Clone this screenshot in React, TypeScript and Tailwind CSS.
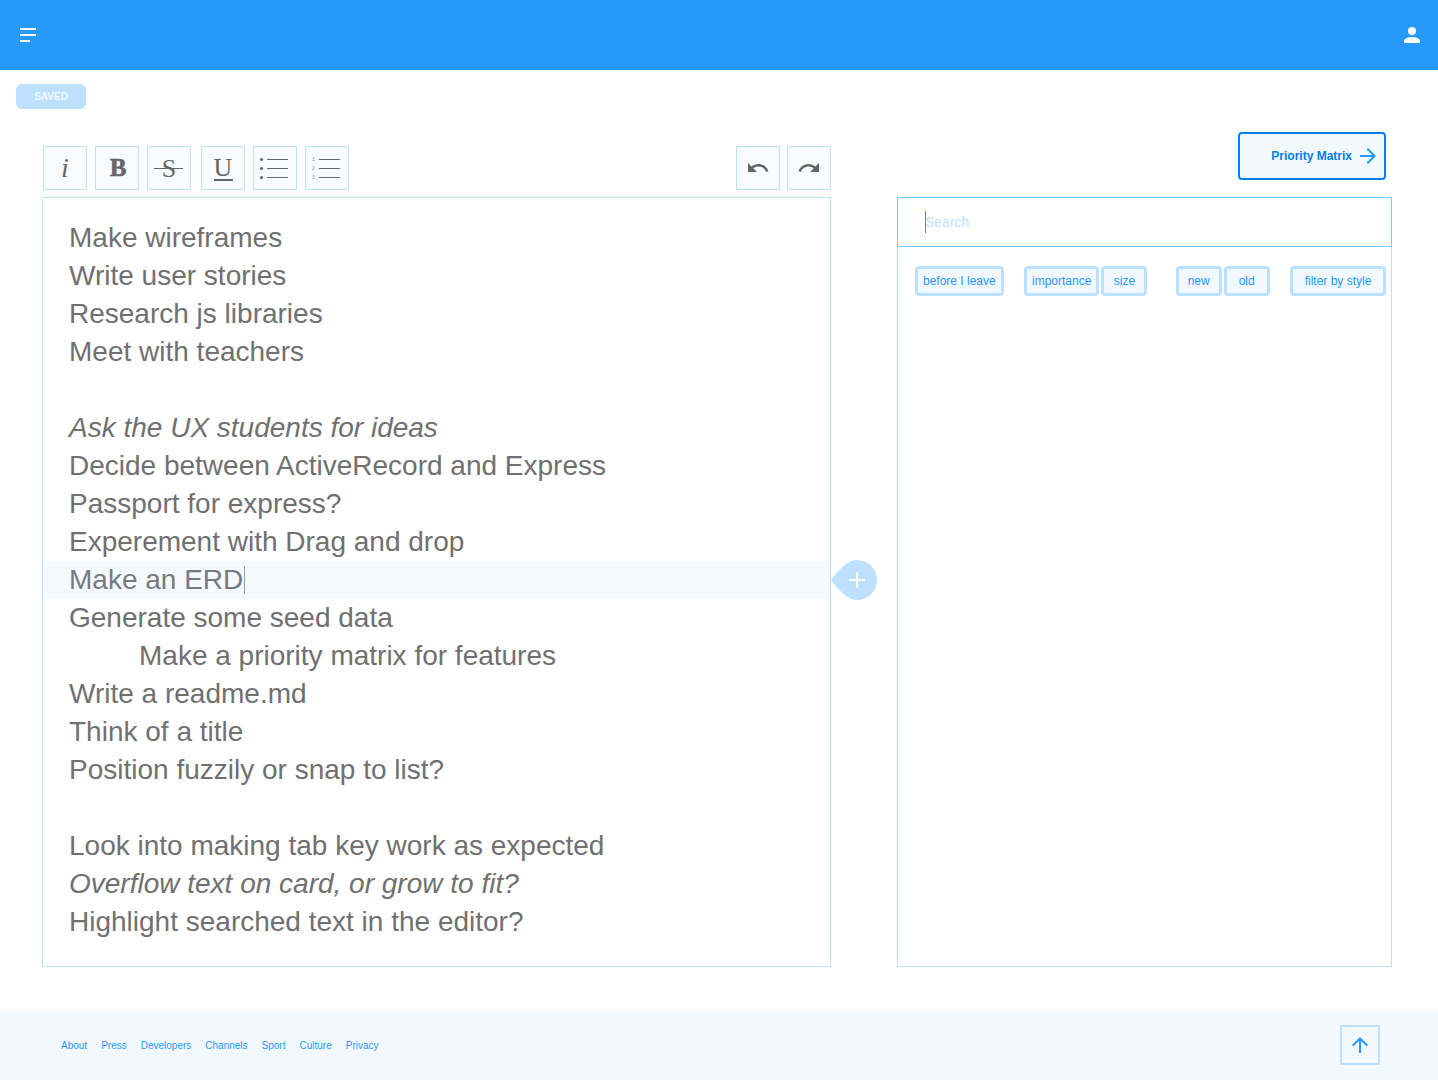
import type { ReactNode } from 'react';

type Line = { text: string; italic?: boolean; indent?: boolean; active?: boolean };

const lines: Line[] = [
  { text: 'Make wireframes' },
  { text: 'Write user stories' },
  { text: 'Research js libraries' },
  { text: 'Meet with teachers' },
  { text: '' },
  { text: 'Ask the UX students for ideas', italic: true },
  { text: 'Decide between ActiveRecord and Express' },
  { text: 'Passport for express?' },
  { text: 'Experement with Drag and drop' },
  { text: 'Make an ERD', active: true },
  { text: 'Generate some seed data' },
  { text: 'Make a priority matrix for features', indent: true },
  { text: 'Write a readme.md' },
  { text: 'Think of a title' },
  { text: 'Position fuzzily or snap to list?' },
  { text: '' },
  { text: 'Look into making tab key work as expected' },
  { text: 'Overflow text on card, or grow to fit?', italic: true },
  { text: 'Highlight searched text in the editor?' },
];

const links = ['About', 'Press', 'Developers', 'Channels', 'Sport', 'Culture', 'Privacy'];

function ToolButton({ label, children }: { label: string; children: ReactNode }) {
  return (
    <button
      type="button"
      aria-label={label}
      className="flex size-11 items-center justify-center border border-[#bde0fe] bg-[#f8fbff] text-[#666] [font-family:'Liberation_Serif',serif]"
    >
      {children}
    </button>
  );
}

function ListIcon({ numbered }: { numbered?: boolean }) {
  return (
    <svg className="size-[42px]" viewBox="0 0 42 42" fill="currentColor" aria-hidden="true">
      {[13, 22, 31].map((y, i) => (
        <g key={y}>
          {numbered ? (
            <text x="6" y={y + 1} fontSize="5" fontFamily="Liberation Sans" fill="#8c8c8c">
              {i + 1}
            </text>
          ) : (
            <circle cx="7.5" cy={y - 0.5} r="1.6" />
          )}
          <rect x="13" y={y - 1} width="21" height="1" />
        </g>
      ))}
    </svg>
  );
}

function FilterButton({ children, wide }: { children: ReactNode; wide?: boolean }) {
  return (
    <button
      type="button"
      className={
        'h-[30px] whitespace-nowrap rounded border-3 border-[#bde0fe] bg-[#f1f8ff] text-xs text-[#2699fb] ' +
        (wide ? 'min-w-24 px-[11px]' : 'min-w-[46px] px-[5px]')
      }
    >
      {children}
    </button>
  );
}

export default function App() {
  return (
    <div className="flex min-h-screen flex-col bg-white [font-family:'Liberation_Sans',Arial,sans-serif]">
      <header className="flex h-[70px] items-center justify-between bg-[#2699fb] pr-3.5 pl-4 text-white">
        <button type="button" aria-label="Menu" className="p-1">
          <svg className="h-[14px] w-4" viewBox="0 0 16 14" fill="currentColor" aria-hidden="true">
            <path d="M0 0h16v2H0zM0 6h16v2H0zM0 12h10v2H0z" />
          </svg>
        </button>
        <button type="button" aria-label="Account" className="p-1">
          <svg className="size-4" viewBox="0 0 16 16" fill="currentColor" aria-hidden="true">
            <circle cx="8" cy="4" r="4" />
            <path d="M8 10c-2.67 0-8 1.34-8 4v2h16v-2c0-2.66-5.33-4-8-4z" />
          </svg>
        </button>
      </header>

      <div className="px-4 pt-[14px]">
        <button type="button" className="block h-[25px] w-[70px] rounded-md bg-[#bce0fd] text-[10px] font-bold text-[#f1f9ff]">
          SAVED
        </button>
      </div>

      <main className="grid grow grid-cols-[789fr_495fr] gap-x-[66px] pt-[23px] pr-[46px] pb-[43px] pl-[42px]">
        <section className="flex flex-col">
          <div className="flex h-[65px] items-center justify-between pt-[7px] pl-px" role="toolbar" aria-label="Formatting">
            <div className="flex gap-2.5">
              <div className="flex gap-2">
                <ToolButton label="Italic">
                  <span className="text-[28px] leading-8 italic">i</span>
                </ToolButton>
                <ToolButton label="Bold">
                  <svg className="size-[42px]" viewBox="0 0 42 42" fill="currentColor" stroke="currentColor" aria-hidden="true">
                    <text x="22" y="29" fontSize="25" fontWeight="bold" strokeWidth="0.6" textAnchor="middle" fontFamily="Liberation Serif">B</text>
                  </svg>
                </ToolButton>
                <ToolButton label="Strikethrough">
                  <svg className="size-[42px]" viewBox="0 0 42 42" fill="currentColor" aria-hidden="true">
                    <text x="21" y="30" fontSize="26" textAnchor="middle" fontFamily="Liberation Serif">S</text>
                    <rect x="6" y="21" width="29" height="1" />
                  </svg>
                </ToolButton>
              </div>
              <div className="flex gap-2">
                <ToolButton label="Underline">
                  <svg className="size-[42px]" viewBox="0 0 42 42" fill="currentColor" aria-hidden="true">
                    <text x="21" y="29" fontSize="26" textAnchor="middle" fontFamily="Liberation Serif">U</text>
                    <rect x="12" y="32" width="19" height="2" />
                  </svg>
                </ToolButton>
                <ToolButton label="Bulleted list">
                  <ListIcon />
                </ToolButton>
                <ToolButton label="Numbered list">
                  <ListIcon numbered />
                </ToolButton>
              </div>
            </div>
            <div className="flex gap-[7px]">
              <ToolButton label="Undo">
                <svg className="size-6" viewBox="0 0 24 24" fill="currentColor" aria-hidden="true">
                  <path d="M12.5 8c-2.65 0-5.05.99-6.9 2.6L2 7v9h9l-3.62-3.62c1.39-1.16 3.16-1.88 5.12-1.88 3.54 0 6.55 2.31 7.6 5.5l2.37-.78C21.08 11.03 17.15 8 12.5 8z" />
                </svg>
              </ToolButton>
              <ToolButton label="Redo">
                <svg className="size-6" viewBox="0 0 24 24" fill="currentColor" aria-hidden="true">
                  <path d="M18.4 10.6C16.55 8.99 14.15 8 11.5 8c-4.65 0-8.58 3.03-9.96 7.22L3.9 16c1.05-3.19 4.05-5.5 7.6-5.5 1.95 0 3.73.72 5.12 1.88L13 16h9V7l-3.6 3.6z" />
                </svg>
              </ToolButton>
            </div>
          </div>

          <div
            role="textbox"
            aria-multiline="true"
            aria-label="Notes"
            tabIndex={0}
            className="grow border border-[#bde0fe] pt-[21px] pb-[25px] text-[28px] leading-[38px] text-[#707070]"
          >
            {lines.map((line, i) => (
              <div
                key={i}
                className={
                  'relative h-[38px] whitespace-nowrap ' +
                  (line.indent ? 'pl-24 ' : 'pl-[26px] ') +
                  (line.italic ? 'italic ' : '') +
                  (line.active ? 'flex items-center bg-[#f5faff] text-[#777b7e]' : '')
                }
              >
                {line.text}
                {line.active && (
                  <>
                    <span className="ml-px h-7 w-px bg-[#9a9da0]" />
                    <button type="button" aria-label="Add card" className="absolute top-[-1px] left-full ml-px">
                      <svg className="h-10 w-[46px]" viewBox="0 0 46 40" aria-hidden="true">
                        <path d="M0 20C6 12 16 0 26 0a20 20 0 0 1 0 40C16 40 6 28 0 20z" fill="#bce0fd" />
                        <path d="M25 12h2v7h7v2h-7v7h-2v-7h-7v-2h7z" fill="#fff" />
                      </svg>
                    </button>
                  </>
                )}
              </div>
            ))}
          </div>
        </section>

        <section className="flex flex-col">
          <div className="flex h-[65px] items-start justify-end pr-1.5">
            <a
              href="#matrix"
              className="flex h-12 w-[148px] items-center justify-end gap-2 rounded border-2 border-[#0080ec] bg-[#f1f9ff] pr-2 text-xs font-bold text-[#0080ec]"
            >
              Priority Matrix
              <svg className="size-4 text-[#2699fb]" viewBox="0 0 16 16" fill="currentColor" aria-hidden="true">
                <path d="M8 0L6.59 1.41 12.17 7H0v2h12.17l-5.58 5.59L8 16l8-8z" />
              </svg>
            </a>
          </div>

          <div className="flex grow flex-col border border-[#bde0fe]">
            <div className="relative -mx-px -mt-px">
              <input
                type="text"
                aria-label="Search"
                placeholder="Search"
                className="block h-[50px] w-full border border-[#7fc4fd] px-[27px] text-sm text-[#2699fb] outline-none placeholder:text-[#bce0fd]"
              />
              <span className="absolute top-3.5 left-7 h-[22px] w-px bg-[#2699fb]" />
            </div>
            <div className="flex justify-between pt-[19px] pr-[5px] pl-[17px]">
              <FilterButton>before I leave</FilterButton>
              <div className="flex gap-0.5">
                <FilterButton>importance</FilterButton>
                <FilterButton>size</FilterButton>
              </div>
              <div className="flex gap-0.5 pl-2">
                <FilterButton>new</FilterButton>
                <FilterButton>old</FilterButton>
              </div>
              <FilterButton wide>filter by style</FilterButton>
            </div>
          </div>
        </section>
      </main>

      <footer className="flex h-[70px] items-center justify-between bg-[#f1f9ff] pr-[58px] pl-[61px]">
        <nav className="flex gap-3.5 text-[10px] text-[#2699fb]">
          {links.map((label) => (
            <a key={label} href={'#' + label.toLowerCase()}>
              {label}
            </a>
          ))}
        </nav>
        <button
          type="button"
          aria-label="Back to top"
          className="flex size-10 items-center justify-center border-2 border-[#bce0fd] text-[#2699fb]"
        >
          <svg className="size-4" viewBox="0 0 16 16" fill="currentColor" aria-hidden="true">
            <path d="M0 8l1.41 1.41L7 3.83V16h2V3.83l5.58 5.59L16 8 8 0z" />
          </svg>
        </button>
      </footer>
    </div>
  );
}
